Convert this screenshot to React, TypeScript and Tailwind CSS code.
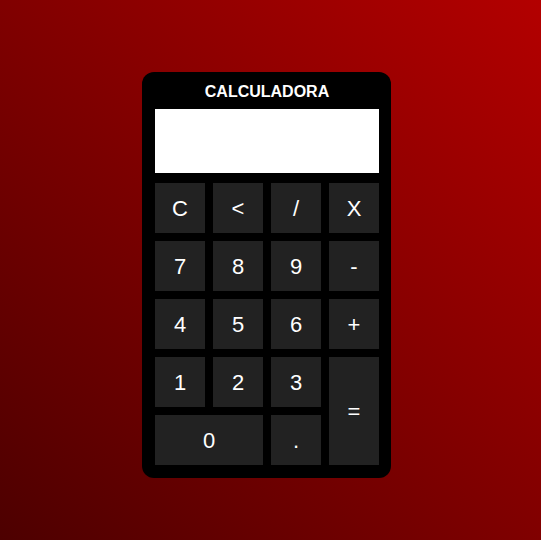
const KEYS = [
  { label: 'C' },
  { label: '<' },
  { label: '/' },
  { label: 'X' },
  { label: '7' },
  { label: '8' },
  { label: '9' },
  { label: '-' },
  { label: '4' },
  { label: '5' },
  { label: '6' },
  { label: '+' },
  { label: '1' },
  { label: '2' },
  { label: '3' },
  { label: '=', className: 'row-span-2' },
  { label: '0', className: 'col-span-2' },
  { label: '.' },
];

export default function App() {
  return (
    <div className="min-h-screen w-full bg-[linear-gradient(to_top_right,#4d0000,#b30000)] pl-[142px] pt-[72px] font-['Liberation_Sans',Arial,sans-serif]">
      <div className="w-[249px] rounded-[12px] bg-black pl-[13px] pr-[12px] pt-[11px] pb-[13px]">
        {/* Title */}
        <h1 className="h-[18px] text-center text-[16px] font-bold leading-[18px] text-white">
          CALCULADORA
        </h1>

        {/* Display */}
        <div className="mt-[8px] h-[64px] w-full bg-white" />

        {/* Keypad */}
        <div className="mt-[10px] grid grid-cols-[repeat(4,50px)] auto-rows-[50px] gap-2">
          {KEYS.map((k) => (
            <button
              key={k.label}
              className={`flex items-center justify-center bg-[#222222] text-[22px] text-white ${k.className ?? ''}`}
            >
              {k.label}
            </button>
          ))}
        </div>
      </div>
    </div>
  );
}
